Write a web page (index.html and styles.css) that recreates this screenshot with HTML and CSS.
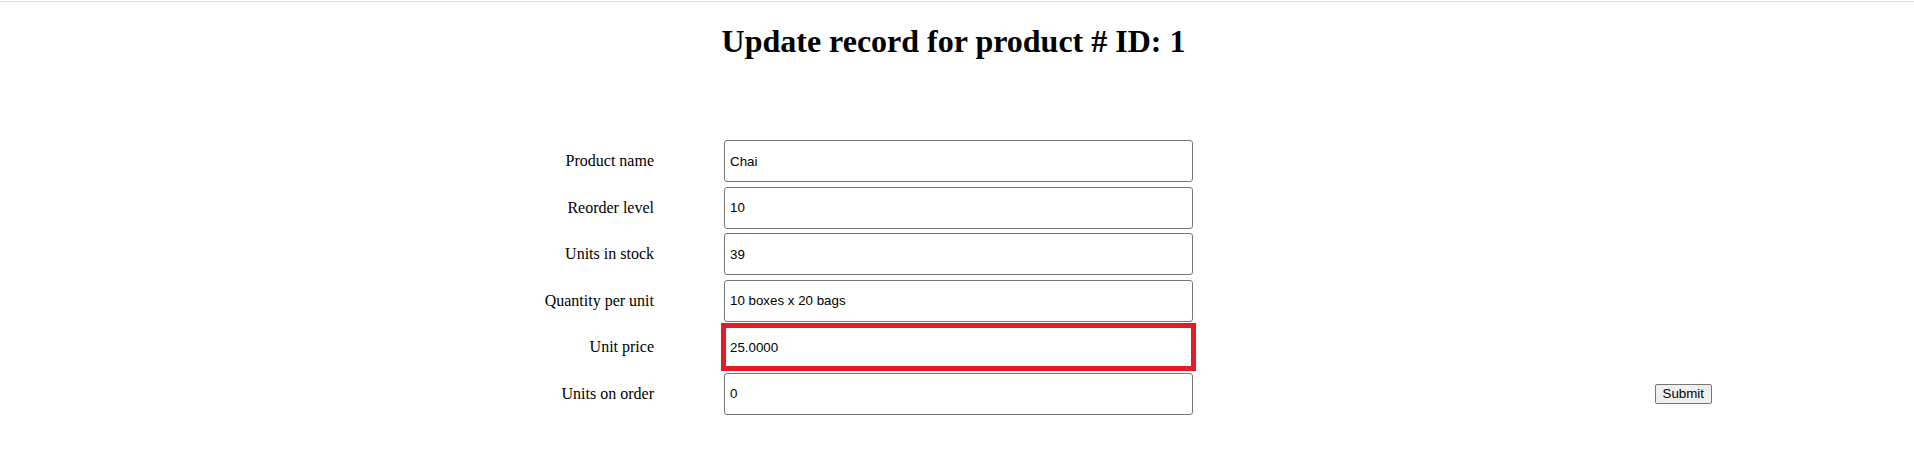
FILE: index.html
```html
<!DOCTYPE html>
<html lang="en">
<head>
<meta charset="utf-8">
<title>Update record</title>
<link rel="stylesheet" href="styles.css">
</head>
<body>
<div class="chrome-line"></div>
<h1 class="title">Update record for product # ID: 1</h1>
<form class="form">
  <label class="label" for="f-name">Product name</label>
  <input class="field" id="f-name" type="text" value="Chai">
  <div class="cell"></div>

  <label class="label" for="f-reorder">Reorder level</label>
  <input class="field" id="f-reorder" type="text" value="10">
  <div class="cell"></div>

  <label class="label" for="f-stock">Units in stock</label>
  <input class="field" id="f-stock" type="text" value="39">
  <div class="cell"></div>

  <label class="label" for="f-qty">Quantity per unit</label>
  <input class="field" id="f-qty" type="text" value="10 boxes x 20 bags">
  <div class="cell"></div>

  <label class="label" for="f-price">Unit price</label>
  <input class="field field-error" id="f-price" type="text" value="25.0000">
  <div class="cell"></div>

  <label class="label" for="f-order">Units on order</label>
  <input class="field" id="f-order" type="text" value="0">
  <div class="cell cell-submit"><button class="submit" type="button">Submit</button></div>
</form>
</body>
</html>
```

FILE: styles.css
```css
html, body {
  margin: 0;
  padding: 0;
  background: #ffffff;
}

body {
  font-family: "Liberation Serif", "Times New Roman", serif;
  font-size: 16px;
  color: #000000;
}

.chrome-line {
  height: 1px;
  margin-top: 1px;
  background: #dedede;
}

.title {
  margin: 21px 0 0 0;
  padding-right: 7px;
  font-size: 32px;
  font-weight: bold;
  text-align: center;
  line-height: 37px;
}

.form {
  display: grid;
  width: 1518px;
  margin: 80px auto 0 auto;
  grid-template-columns: 456px 469px 1fr;
  grid-auto-rows: 42px;
  column-gap: 70px;
  row-gap: 4.6px;
}

.label {
  align-self: center;
  text-align: right;
  font-size: 16px;
  line-height: 18px;
}

.field {
  box-sizing: border-box;
  width: 469px;
  height: 42px;
  margin: 0;
  padding: 0 5px;
  border: 1px solid #767676;
  border-radius: 3px;
  font-family: "Liberation Sans", Arial, sans-serif;
  font-size: 13.33px;
  color: #000000;
  background: #ffffff;
}

.field-error {
  border-radius: 0;
  outline: 5px solid #e31c25;
  outline-offset: -2px;
}

.cell {
  display: flex;
  align-items: center;
  justify-content: flex-end;
}

.cell-submit {
  padding-right: 4px;
}

.submit {
  font-family: "Liberation Sans", Arial, sans-serif;
  font-size: 13.33px;
  padding: 1px 7px;
  color: #000000;
  background: #efefef;
  border: 1px solid #767676;
  border-radius: 2px;
  height: 20px;
  line-height: 15px;
}
```
